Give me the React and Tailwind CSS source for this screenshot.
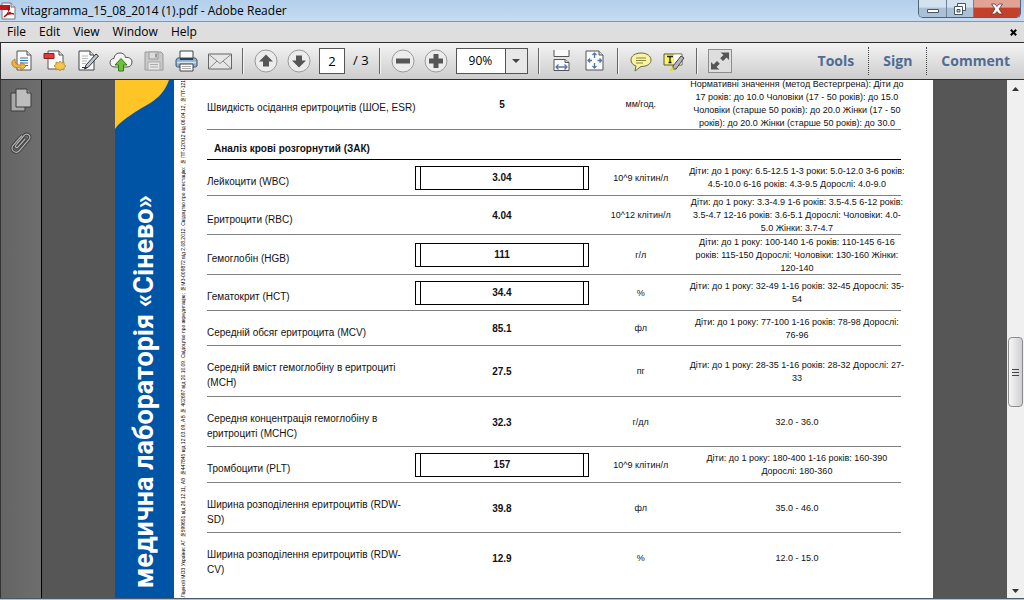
import React, { useState } from "react";

const rows = [
  {
    name: "Лейкоцити (WBC)",
    value: "3.04",
    flagged: true,
    unit: "10^9 клітин/л",
    norm: [
      "Діти: до 1 року: 6.5-12.5 1-3 роки: 5.0-12.0 3-6 років:",
      "4.5-10.0 6-16 років: 4.3-9.5 Дорослі: 4.0-9.0",
    ],
    height: "h-9",
  },
  {
    name: "Еритроцити (RBC)",
    value: "4.04",
    unit: "10^12 клітин/л",
    norm: [
      "Діти: до 1 року: 3.3-4.9 1-6 років: 3.5-4.5 6-12 років:",
      "3.5-4.7 12-16 років: 3.6-5.1 Дорослі: Чоловіки: 4.0-",
      "5.0 Жінки: 3.7-4.7",
    ],
    height: "h-[39px]",
  },
  {
    name: "Гемоглобін (HGB)",
    value: "111",
    flagged: true,
    unit: "г/л",
    norm: [
      "Діти: до 1 року: 100-140 1-6 років: 110-145 6-16",
      "років: 115-150 Дорослі: Чоловіки: 130-160 Жінки:",
      "120-140",
    ],
    height: "h-10",
  },
  {
    name: "Гематокрит (HCT)",
    value: "34.4",
    flagged: true,
    unit: "%",
    norm: ["Діти: до 1 року: 32-49 1-16 років: 32-45 Дорослі: 35-", "54"],
    height: "h-9",
  },
  {
    name: "Середній обсяг еритроцита (MCV)",
    value: "85.1",
    unit: "фл",
    norm: ["Діти: до 1 року: 77-100 1-16 років: 78-98 Дорослі:", "76-96"],
    height: "h-[35px]",
  },
  {
    name: "Середній вміст гемоглобіну в еритроциті (MCH)",
    value: "27.5",
    unit: "пг",
    norm: ["Діти: до 1 року: 28-35 1-16 років: 28-32 Дорослі: 27-", "33"],
    height: "h-[51px]",
  },
  {
    name: "Середня концентрація гемоглобіну в еритроциті (MCHC)",
    value: "32.3",
    unit: "г/дл",
    norm: ["32.0 - 36.0"],
    height: "h-[50px]",
  },
  {
    name: "Тромбоцити (PLT)",
    value: "157",
    flagged: true,
    unit: "10^9 клітин/л",
    norm: ["Діти: до 1 року: 180-400 1-16 років: 160-390", "Дорослі: 180-360"],
    height: "h-9",
  },
  {
    name: "Ширина розподілення еритроцитів (RDW-SD)",
    value: "39.8",
    unit: "фл",
    norm: ["35.0 - 46.0"],
    height: "h-[50px]",
  },
  {
    name: "Ширина розподілення еритроцитів (RDW-CV)",
    value: "12.9",
    unit: "%",
    norm: ["12.0 - 15.0"],
    height: "h-[51px]",
  },
];

const esrRow = {
  name: "Швидкість осідання еритроцитів (ШОЕ, ESR)",
  oneLine: true,
  value: "5",
  unit: "мм/год.",
  norm: [
    "Нормативні значення (метод Вестергрена): Діти до",
    "17 років: до 10.0 Чоловіки (17 - 50 років): до 15.0",
    "Чоловіки (старше 50 років): до 20.0 Жінки (17 - 50",
    "років): до 20.0 Жінки (старше 50 років): до 30.0",
  ],
  height: "h-[52px]",
};

function PdfIcon() {
  return (
    <svg className="h-[18px] w-4 shrink-0" viewBox="0 0 16 18">
      <path d="M2 1h9l4 4v12H2z" fill="#fff" stroke="#777" />
      <path d="M11 1v4h4" fill="#ddd" stroke="#777" />
      <path d="M0 3h10v5H0z" fill="#c8141c" />
      <path
        d="M4 15c3-2 5-6 5-9 0-1-1.500-1-1 1 .5 3 3 5 6 5-3-1-7 0-10 3z"
        fill="none"
        stroke="#a80f16"
        strokeWidth="1.300"
      />
    </svg>
  );
}

function ToolButton({ label, children }) {
  return (
    <button aria-label={label} className="flex h-6 w-6 shrink-0 items-center justify-center">
      <svg className="h-6 w-6" viewBox="0 0 24 24" fill="none" strokeLinejoin="round">
        {children}
      </svg>
    </button>
  );
}

function Separator({ className = "" }) {
  return (
    <div className={`h-[26px] w-0.5 shrink-0 border-l border-[#666] bg-[#f5f5f5] ${className}`} />
  );
}

function FileTools() {
  return (
    <div className="flex gap-[9px]">
      <ToolButton label="Open">
        <path d="M7 2h10l4 4v15H7z" fill="#fafafa" stroke="#555" />
        <path d="M17 2v4h4" fill="#ddd" stroke="#555" />
        <path d="M10 9h8M10 11.500h8M10 14h8M12 16.500h6" stroke="#2f73b5" strokeWidth="1.200" />
        <path
          d="M5 10c-4 2-4 6-1 8 2 1 5 1 7 1v3l5-5-5-4v3c-4 0-6-1-6-6z"
          fill="#f2b33c"
          stroke="#a8731a"
          strokeWidth=".8"
        />
      </ToolButton>
      <ToolButton label="Create PDF">
        <path d="M5 2h11l4 4v14H5z" fill="#fafafa" stroke="#555" />
        <path d="M16 2v4h4" fill="#ddd" stroke="#555" />
        <path d="M1 4.500h10v5H1z" fill="#e23a3f" stroke="#8e1d20" />
        <path
          d="M17 12l1.500 2 2.500-1v2.500l2 1.500-2 1.500v2.500l-2.500-1-1.500 2-1.500-2-2.500 1v-2.500l-2-1.500 2-1.500V13l2.500 1z"
          fill="#f6c451"
          stroke="#b98321"
          strokeWidth=".8"
        />
      </ToolButton>
      <ToolButton label="Edit">
        <path d="M3 2h11l4 4v15H3z" fill="#fafafa" stroke="#444" />
        <path d="M14 2v4h4" fill="#ddd" stroke="#444" />
        <path d="M6 7h6M6 9.500h6M6 12h5M6 14.500h4" stroke="#bbb" />
        <path d="M20 5l2.500 2-10 11-4 2 1.500-4z" fill="#b9c7d6" stroke="#333" />
        <path d="M6 18.500h5" stroke="#333" />
      </ToolButton>
      <ToolButton label="Upload">
        <path
          d="M6 18c-3.500 0-5-2-5-4.500S3 9.500 5 9.500C5.500 5.500 8 4 11 4c3 0 5 1.500 5.500 4.500 4-.5 6.500 1.500 6.500 4.500 0 3-2 5-5 5z"
          fill="#f4f4f4"
          stroke="#555"
        />
        <path d="M12 9.500l6 6.500h-3.500v6h-5v-6H6z" fill="#6fbf3a" stroke="#2f7d16" />
      </ToolButton>
      <ToolButton label="Save">
        <path d="M3 3h16l2 2v16H3z" fill="#c9c9c9" stroke="#999" />
        <path d="M7 3h9v7H7z" fill="#dcdcdc" stroke="#999" />
        <path d="M13 4.500h2v4h-2z" fill="#999" />
        <path d="M6 13h12v8H6z" fill="#e6e6e6" stroke="#aaa" />
        <path d="M8 15.500h8M8 18h8" stroke="#aaa" />
      </ToolButton>
      <ToolButton label="Print">
        <path d="M5 2h13v8H5z" fill="#fafafa" stroke="#444" />
        <path
          d="M2.500 9h18l1.500 2v6l-1.500 1h-18L1 17v-6z"
          fill="#8fb2d2"
          stroke="#40566b"
        />
        <path d="M5 9h13v2H5z" fill="#30424f" />
        <path d="M2 13.500h19" stroke="#d3e3f0" strokeWidth="1.500" />
        <path d="M5 15h13v7H5z" fill="#fafafa" stroke="#444" />
        <path d="M7 17.500h9M7 19.500h9" stroke="#aaa" />
      </ToolButton>
      <ToolButton label="Email">
        <path d="M.5 5h23v15H.5z" fill="#e6e6e6" stroke="#666" />
        <path d="M1 5.500l11 9 11-9M1 19.500l8-7.500M23 19.500l-8-7.500" stroke="#888" />
      </ToolButton>
    </div>
  );
}

function CircleButton({ label, d }) {
  return (
    <ToolButton label={label}>
      <circle cx="12" cy="12" r="11" fill="#ececec" stroke="#9a9a9a" />
      <path d={d} fill="#565656" />
    </ToolButton>
  );
}

function Toolbar() {
  const [page, setPage] = useState("2");
  const [zoom, setZoom] = useState("90%");

  return (
    <div className="flex h-[38px] shrink-0 items-center border-y border-l border-[#2e2e2e] bg-gradient-to-b from-[#f3f3f3] to-[#cdcdcd] pl-[9px]">
      <FileTools />
      <Separator className="ml-[10px]" />
      <div className="ml-[10px] flex items-center gap-[9px]">
        <CircleButton label="Previous page" d="M12 5.500l7 7h-4v5H9v-5H5z" />
        <CircleButton label="Next page" d="M12 18.500l7-7h-4v-5H9v5H5z" />
      </div>
      <label className="ml-2 flex items-center gap-2 text-[13px]">
        <input
          aria-label="Page"
          className="h-[26px] w-[26px] border border-[#555] bg-white text-center outline-none"
          value={page}
          onChange={(e) => setPage(e.target.value)}
        />
        <span>/ 3</span>
      </label>
      <Separator className="ml-[10px]" />
      <div className="ml-[10px] flex items-center gap-[9px]">
        <CircleButton label="Zoom out" d="M5 9.500h14v5H5z" />
        <CircleButton label="Zoom in" d="M9.500 5h5v4.500h4.500v5h-4.500v4.500h-5v-4.500H5v-5h4.500z" />
      </div>
      <div className="relative ml-2 shrink-0">
        <select
          aria-label="Zoom"
          className="block h-[26px] w-[72px] appearance-none border border-[#555] bg-white pl-3 text-xs outline-none"
          value={zoom}
          onChange={(e) => setZoom(e.target.value)}
        >
          <option>75%</option>
          <option>90%</option>
          <option>100%</option>
        </select>
        <div className="pointer-events-none absolute inset-y-px right-px flex w-[22px] items-center justify-center border-l border-[#555] bg-[#e8e8e8]">
          <svg className="h-1 w-2" viewBox="0 0 8 4">
            <path d="M0 0h8L4 4z" fill="#444" />
          </svg>
        </div>
      </div>
      <Separator className="ml-[10px]" />
      <div className="ml-[10px] flex gap-[9px]">
        <ToolButton label="Fit width">
          <path d="M4 1v6.500h15V1" fill="#fafafa" stroke="#555" />
          <path d="M4 21.500v-11h11l4 3v8z" fill="#fafafa" stroke="#555" />
          <path d="M15 10.500v3h4" fill="#ddd" stroke="#555" />
          <path d="M6 18h11M8.500 15.500L6 18l2.500 2.500M14.500 15.500L17 18l-2.500 2.500" stroke="#5a74b0" strokeWidth="1.300" />
        </ToolButton>
        <ToolButton label="Fit page">
          <path d="M3 2h13l4 4v15H3z" fill="#fafafa" stroke="#555" />
          <path d="M16 2v4h4" fill="#ddd" stroke="#555" />
          <path
            d="M11.500 4v5M11.500 19v-5M5 11.500h4M18.500 11.500h-4M9.500 6l2-2 2 2M9.500 17l2 2 2-2M7 9.500l-2 2 2 2M16.500 9.500l2 2-2 2"
            stroke="#5a74b0"
            strokeWidth="1.300"
          />
        </ToolButton>
      </div>
      <Separator className="ml-[10px]" />
      <div className="ml-[10px] flex gap-[9px]">
        <ToolButton label="Sticky note">
          <path
            d="M12 4c6 0 10 3 10 7s-4 6.500-10 6.500L6 22l1-5c-3-1-5-3-5-6 0-4 4-7 10-7z"
            fill="#f8f3a0"
            stroke="#6b6a4a"
          />
          <path d="M7 9h10M7 11.500h10M7 14h7" stroke="#8a8640" />
        </ToolButton>
        <ToolButton label="Highlight text">
          <path d="M2 5h18v11H2z" fill="#fdf55e" stroke="#555" />
          <path d="M12 5.500h7.500v10H12z" fill="#fff" />
          <path d="M5 7.500h6M8 7.500v6M6.500 13.500h3" stroke="#222" strokeWidth="1.300" />
          <path d="M19 7l3 2-8 11h-3v-3z" fill="#b5b5b5" stroke="#444" />
          <path d="M10 18l2 2-2 2H7z" fill="#e8dc22" />
        </ToolButton>
      </div>
      <Separator className="ml-[10px]" />
      <button aria-label="Read mode" className="ml-[10px] shrink-0 border border-[#8d8d8d] bg-[#dedede]">
        <svg className="h-[22px] w-[22px]" viewBox="0 0 22 22">
          <path
            d="M11.500 2.500H20V10l-2.500-2.500-3.500 3.500-2.800-2.800L14.500 5zM10.500 19.500H2V12l2.500 2.500L8 11l2.800 2.800L7.500 17z"
            fill="#555"
          />
        </svg>
      </button>
      <div className="ml-auto flex items-center text-sm font-bold text-[#4e6c94]">
        <button className="px-[14px]">Tools</button>
        <button className="border-x border-dotted border-[#444] px-[14px] leading-7">Sign</button>
        <button className="px-[14px]">Comment</button>
      </div>
    </div>
  );
}

function TitleBar() {
  return (
    <div className="flex h-[22px] shrink-0 items-start border-b border-[#7f96ae] bg-gradient-to-b from-[#b3cfec] to-[#c6dcf2]">
      <div className="flex h-[21px] items-center gap-[5px]">
        <PdfIcon />
        <h1 className="text-xs">vitagramma_15_08_2014 (1).pdf - Adobe Reader</h1>
      </div>
      <div className="ml-auto mr-[3px] flex h-[18px] overflow-hidden rounded-b-[5px] border border-t-0 border-[#4f6478]">
        <button
          aria-label="Minimize"
          className="flex w-7 items-center justify-center border-r border-[#6d8296] bg-gradient-to-b from-[#d3e2f0] from-40% to-[#a9c0d6] to-50%"
        >
          <svg className="h-3 w-3" viewBox="0 0 12 12">
            <path d="M.5 6.500h11v3H.5z" fill="#fff" stroke="#4a5562" />
          </svg>
        </button>
        <button
          aria-label="Restore"
          className="flex w-[27px] items-center justify-center border-r border-[#6d8296] bg-gradient-to-b from-[#d3e2f0] from-40% to-[#a9c0d6] to-50%"
        >
          <svg className="h-3 w-3" viewBox="0 0 12 12">
            <path d="M3.500.5h8v7h-8z" fill="#fff" stroke="#4a5562" />
            <path d="M.5 3.500h8v8h-8z" fill="#fff" stroke="#4a5562" />
            <path d="M3 6.500h3v2.500H3z" fill="#b9cbdc" stroke="#4a5562" />
          </svg>
        </button>
        <button
          aria-label="Close"
          className="flex w-[46px] items-center justify-center bg-gradient-to-b from-[#e2a394] from-40% to-[#c4402a] to-50%"
        >
          <svg className="h-3 w-3" viewBox="0 0 12 12">
            <path
              d="M.5 1h3.500l2 2.500L8 1h3.500L8 6l3.500 5H8L6 8.500 4 11H.5L4 6z"
              fill="#fff"
              stroke="#5b3a3a"
              strokeWidth=".8"
            />
          </svg>
        </button>
      </div>
    </div>
  );
}

function MenuBar() {
  return (
    <div className="flex h-5 shrink-0 items-center bg-[#dedede] pr-[7px] text-xs">
      <div className="flex gap-[13px] pl-[7px]">
        <button>File</button>
        <button>Edit</button>
        <button>View</button>
        <button>Window</button>
        <button>Help</button>
      </div>
      <button aria-label="Close document" className="ml-auto">
        <svg className="h-[7px] w-[7px]" viewBox="0 0 7 7">
          <path d="M.8.8l5.400 5.400M6.200.8L.8 6.200" stroke="#000" strokeWidth="2" />
        </svg>
      </button>
    </div>
  );
}

function SidePane() {
  return (
    <div className="flex w-[42px] shrink-0 flex-col items-center gap-[18px] border-l border-r border-l-[#333] border-r-black bg-gradient-to-r from-[#646464] to-[#6e6e6e] pt-2">
      <button aria-label="Page thumbnails">
        <svg className="h-6 w-[22px]" viewBox="0 0 22 24">
          <path d="M1 5h14v18H1z" fill="#a8a8a8" stroke="#3a3a3a" />
          <path d="M6 1h11l4 4v14H6z" fill="#bdbdbd" stroke="#3a3a3a" />
          <path d="M17 1v4h4" fill="#999" stroke="#3a3a3a" />
        </svg>
      </button>
      <button aria-label="Attachments">
        <svg className="h-6 w-[22px]" viewBox="0 0 22 24" fill="none" strokeLinecap="round">
          <path
            d="M15 9l-7 8c-1.500 1.500-3.500 0-2-2L14 5.500c2.500-3 8-.5 5 4L9.500 20.500c-3.500 4-10 0-6.500-5L11.500 6"
            stroke="#3c3c3c"
            strokeWidth="3"
          />
          <path
            d="M15 9l-7 8c-1.500 1.500-3.500 0-2-2L14 5.500c2.500-3 8-.5 5 4L9.500 20.500c-3.500 4-10 0-6.500-5L11.500 6"
            stroke="#b4b4b4"
            strokeWidth="1.200"
          />
        </svg>
      </button>
    </div>
  );
}

function ResultRow({ row }) {
  return (
    <tr
      className={`${row.height} [&>td]:shadow-[inset_0_-1px_0_#808080] last:[&>td]:shadow-none`}
    >
      <td
        className={`pt-[7px] text-[10px] leading-[15px] ${row.oneLine ? "whitespace-nowrap" : ""}`}
      >
        {row.name}
      </td>
      <td className="text-center text-[10px] leading-[15px] font-bold">
        {row.flagged ? (
          <div className="border border-black px-1">
            <div className="border-x border-black py-[3px] leading-4">{row.value}</div>
          </div>
        ) : (
          row.value
        )}
      </td>
      <td className="text-center text-[9px] leading-[13px]">{row.unit}</td>
      <td className="text-[9px] leading-[13px] whitespace-nowrap">
        <div className="flex flex-col items-center">
          {row.norm.map((line) => (
            <p key={line}>{line}</p>
          ))}
        </div>
      </td>
    </tr>
  );
}

function ReportPage() {
  return (
    <div className="mr-[74px] ml-[73px] flex min-w-0 flex-1 overflow-hidden bg-white">
      {/* brand band */}
      <div className="flex w-[59px] shrink-0 flex-col justify-between bg-[#0054a6]">
        <svg className="h-[49px] w-[59px]" viewBox="0 0 59 49">
          <path d="M0 0H54C47 20 32 24 18 33.500C9 39.500 3 44 0 49Z" fill="#ffc425" />
        </svg>
        <p className="mb-[10px] rotate-180 self-center font-[Roboto,sans-serif] text-[27px] leading-[59px] font-bold whitespace-nowrap text-white [writing-mode:vertical-rl]">
          медична лабораторія «Сінево»
        </p>
      </div>

      {/* licence line */}
      <div className="flex w-[33px] shrink-0 flex-col justify-end pl-[3px]">
        <p className="rotate-180 self-start font-['Liberation_Sans',sans-serif] text-[5px] leading-3 whitespace-nowrap text-black [writing-mode:vertical-rl]">
          Ліцензії МОЗ України: АГ №599651 від 26.12.11, АВ №447845 від 12.03.09, АВ № 402697 від
          20.10.09. Свідоцтво про акредитацію: №МЗ-009872 від 2.08.2012. Свідоцтво про атестацію: №
          ПТ-120\12 від 06.04.12, №ПТ-121\12 від
        </p>
      </div>

      {/* results */}
      <div className="mr-8 min-w-0 flex-1 font-['Liberation_Sans',sans-serif] text-[#111]">
        <table className="-mt-[2px] w-full table-fixed border-separate border-spacing-0">
          <colgroup>
            <col className="w-[30%]" />
            <col className="w-[25%]" />
            <col className="w-[15%]" />
            <col className="w-[30%]" />
          </colgroup>
          <tbody>
            <ResultRow row={esrRow} />
            <tr className="h-[30px]">
              <th
                colSpan={4}
                className="border-b border-black pt-2 pl-[7px] text-left text-[10px] leading-[15px] font-bold"
              >
                Аналіз крові розгорнутий (ЗАК)
              </th>
            </tr>
            {rows.map((row) => (
              <ResultRow key={row.name} row={row} />
            ))}
          </tbody>
        </table>
      </div>
    </div>
  );
}

function ScrollBar() {
  return (
    <div className="flex w-[17px] shrink-0 flex-col items-center bg-[#f0f0f0]">
      <button aria-label="Scroll up" className="flex h-[17px] items-center">
        <svg className="h-1 w-[7px]" viewBox="0 0 7 4">
          <path d="M3.500 0L7 4H0z" fill="#333" />
        </svg>
      </button>
      <div className="flex-[240]" />
      <div className="flex h-[70px] w-[15px] shrink-0 flex-col items-center justify-center gap-0.5 rounded-sm border border-[#8c8c8c] bg-gradient-to-r from-[#f7f7f7] to-[#cfcfd4]">
        <div className="h-px w-[7px] bg-[#444]" />
        <div className="h-px w-[7px] bg-[#444]" />
        <div className="h-px w-[7px] bg-[#444]" />
      </div>
      <div className="flex-[176]" />
      <button aria-label="Scroll down" className="flex h-[15px] items-center">
        <svg className="h-1 w-[7px]" viewBox="0 0 7 4">
          <path d="M0 0h7L3.500 4z" fill="#333" />
        </svg>
      </button>
    </div>
  );
}

function App() {
  return (
    <div className="flex h-screen flex-col overflow-hidden bg-[#dedede] font-['Open_Sans','Noto_Sans',sans-serif] text-black">
      <TitleBar />
      <MenuBar />
      <Toolbar />

      {/* main window */}
      <div className="flex min-h-0 flex-1">
        <SidePane />
        <div className="flex min-w-0 flex-1 bg-[#565656]">
          <ReportPage />
        </div>
        <ScrollBar />
      </div>

      {/* window edge */}
      <div className="h-0.5 shrink-0 border-t border-[#4a5a6a] bg-[#a9c3dc]" />
    </div>
  );
}

export default App;
